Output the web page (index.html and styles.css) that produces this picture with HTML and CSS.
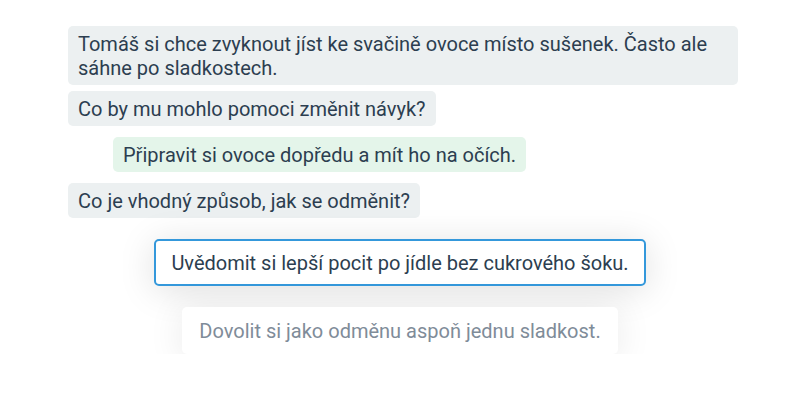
FILE: index.html
```html
<!DOCTYPE html>
<html lang="cs">
<head>
<meta charset="utf-8">
<link rel="stylesheet" href="styles.css">
</head>
<body>
<div class="chat">
  <div class="msg bot">Tomáš si chce zvyknout jíst ke svačině ovoce místo sušenek. Často ale sáhne po sladkostech.</div>
  <div class="msg bot">Co by mu mohlo pomoci změnit návyk?</div>
  <div class="msg user">Připravit si ovoce dopředu a mít ho na očích.</div>
  <div class="msg bot">Co je vhodný způsob, jak se odměnit?</div>
</div>
<div class="choices">
  <button class="choice selected">Uvědomit si lepší pocit po jídle bez cukrového šoku.</button>
  <button class="choice faded">Dovolit si jako odměnu aspoň jednu sladkost.</button>
</div>
</body>
</html>
```

FILE: styles.css
```css
html, body {
  margin: 0;
  padding: 0;
  background: #ffffff;
}
body {
  font-family: Roboto, "Noto Sans", sans-serif;
  font-size: 20px;
  line-height: 24px;
  color: #2c3e50;
  padding: 26px 62px 0 68px;
}
.chat {
  display: flex;
  flex-direction: column;
  align-items: flex-start;
}
.msg {
  padding: 5.5px 10px;
  border-radius: 5px;
  background: #ecf0f1;
}
.msg + .msg {
  margin-top: 6px;
}
.msg.user {
  background: #e4f5ea;
  margin-left: 45px;
  margin-top: 11px;
}
.msg.user + .msg {
  margin-top: 11px;
}
.choices {
  display: flex;
  flex-direction: column;
  align-items: center;
  gap: 21px;
  margin-top: 21px;
  margin-left: -68px;
  margin-right: -62px;
}
.choice {
  font: inherit;
  line-height: 24px;
  padding: 9.5px 15px;
  border: 2px solid transparent;
  border-radius: 5px;
  background: #ffffff;
  color: #2c3e50;
  box-shadow: 0 4px 36px rgba(0, 0, 0, 0.13);
}
.choice.selected {
  border-color: #3498db;
}
.choice.faded {
  color: #7f8c99;
  box-shadow: 0 4px 36px rgba(0, 0, 0, 0.09);
}
```
